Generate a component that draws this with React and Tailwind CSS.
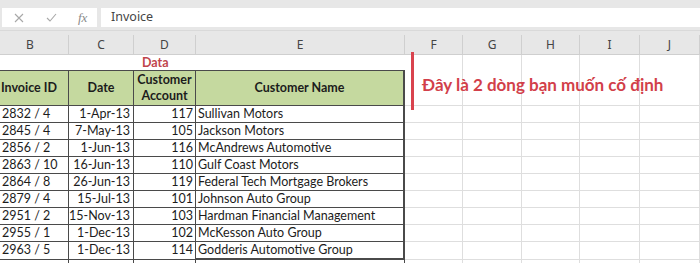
const rows = [
  ['2832 / 4', '1-Apr-13', '117', 'Sullivan Motors'],
  ['2845 / 4', '7-May-13', '105', 'Jackson Motors'],
  ['2856 / 2', '1-Jun-13', '116', 'McAndrews Automotive'],
  ['2863 / 10', '16-Jun-13', '110', 'Gulf Coast Motors'],
  ['2864 / 8', '26-Jun-13', '119', 'Federal Tech Mortgage Brokers'],
  ['2879 / 4', '15-Jul-13', '101', 'Johnson Auto Group'],
  ['2951 / 2', '15-Nov-13', '103', 'Hardman Financial Management'],
  ['2955 / 1', '1-Dec-13', '102', 'McKesson Auto Group'],
  ['2963 / 5', '1-Dec-13', '114', 'Godderis Automotive Group'],
]

const letters = ['B', 'C', 'D', 'E', 'F', 'G', 'H', 'I', 'J']
const emptyCols = ['F', 'G', 'H', 'I', 'J']

const gridClass = "grid grid-cols-[69px_65px_62px_209px_58px_59px_58px_60px_60px]"
const cellFont = { fontFamily: 'Lato, "Open Sans", sans-serif' }

const App = () => {
  return (
    <div className="relative w-[700px] h-[263px] overflow-hidden bg-[#e7e7e7] flex flex-col" style={{ fontFamily: '"Noto Sans", "Open Sans", sans-serif' }}>
      {/* Formula bar */}
      <div className="h-[8px] shrink-0" />
      <div className="flex h-[19px] shrink-0">
        <div className="ml-[2px] w-[95px] bg-white flex items-center text-[#a8a8a8]">
          <svg className="ml-[12px] w-[10px] h-[10px]" viewBox="0 0 10 10" fill="none" stroke="currentColor" strokeWidth="1.1">
            <path d="M1 1l8 8M9 1l-8 8" />
          </svg>
          <svg className="ml-[22px] w-[11px] h-[9px]" viewBox="0 0 11 9" fill="none" stroke="currentColor" strokeWidth="1.1">
            <path d="M1 5l3 3 6-7" />
          </svg>
          <span className="ml-[21px] italic text-[13px] leading-none text-[#8a8a8a]" style={{ fontFamily: '"Liberation Serif", serif' }}>fx</span>
        </div>
        <div className="ml-[4px] flex-1 bg-white flex items-center pl-[10px] text-[12.5px] text-[#454545]">Invoice</div>
      </div>
      <div className="h-[3px] shrink-0" />

      {/* Column letters */}
      <div className={`${gridClass} h-[25px] shrink-0 border-t border-[#d9d9d9] border-b border-b-[#cfcfcf]`}>
        {letters.map((l, i) => (
          <div key={l} className="pt-[4px]">
            <div className={`h-[20px] flex items-center justify-center border-r border-[#cfcfcf] text-[12px] text-[#444] ${i === 0 ? 'pr-[8px]' : ''}`}>{l}</div>
          </div>
        ))}
      </div>

      {/* Sheet body */}
      <div className="flex-1 bg-white text-[12.5px] text-[#1c1c1c]" style={cellFont}>
        {/* Row 1: Data title */}
        <div className={`${gridClass} h-[15px]`}>
          <div className="col-span-4 pl-[142px] text-[12.5px] leading-[15px] font-bold text-[#c0444b]">Data</div>
          {emptyCols.map((c) => (
            <div key={c} className="border-r border-[#dedede]" />
          ))}
        </div>

        {/* Row 2: headers */}
        <div className={`${gridClass} h-[36px]`}>
          <div className="bg-[#c5d99f] border-t border-b border-r border-[#4a4a4a] flex items-center justify-center pr-[10px] font-bold text-[12.5px]">Invoice ID</div>
          <div className="bg-[#c5d99f] border-t border-b border-r border-[#4a4a4a] flex items-center justify-center font-bold text-[12.5px]">Date</div>
          <div className="bg-[#c5d99f] border-t border-b border-r border-[#4a4a4a] flex flex-col items-center justify-center font-bold text-[12.5px] leading-[16px]">
            <span>Customer</span>
            <span>Account</span>
          </div>
          <div className="bg-[#c5d99f] border-t border-b border-r-2 border-[#4a4a4a] flex items-center justify-center font-bold text-[12.5px]">Customer Name</div>
          {emptyCols.map((c, i) => (
            <div key={c} className="relative border-r border-b border-[#dedede]">
              {i === 0 && (
                <div className="absolute z-10 left-[17px] top-[2px] whitespace-nowrap font-bold text-[17px] text-[#d23f4a]">
                  Đây là 2 dòng bạn muốn cố định
                </div>
              )}
            </div>
          ))}
        </div>

        {/* Data rows */}
        {rows.map((r, idx) => (
          <div key={idx} className={`${gridClass} h-[17px] leading-[16px]`}>
            <div className="border-r border-b border-[#4a4a4a] pl-[2px] whitespace-nowrap">{r[0]}</div>
            <div className="border-r border-b border-[#4a4a4a] pr-[3px] text-right whitespace-nowrap">{r[1]}</div>
            <div className="border-r border-b border-[#4a4a4a] pr-[2px] text-right">{r[2]}</div>
            <div className={`border-r-2 border-b border-[#4a4a4a] pl-[2px] whitespace-nowrap ${idx === rows.length - 1 ? 'border-b-2' : ''}`}>{r[3]}</div>
            {emptyCols.map((c) => (
              <div key={c} className="border-r border-b border-[#dedede]" />
            ))}
          </div>
        ))}
        <div className={`${gridClass} h-[17px]`}>
          {letters.map((l, i) => (
            <div key={l} className={i < 4 ? 'border-r border-[#4a4a4a]' : 'border-r border-[#dedede]'} />
          ))}
        </div>
      </div>

      {/* Annotation bar over rows 1-2 */}
      <div className="absolute left-[411px] top-[52px] w-[3px] h-[58px] bg-[#d9434e]" />
    </div>
  )
}

export default App
